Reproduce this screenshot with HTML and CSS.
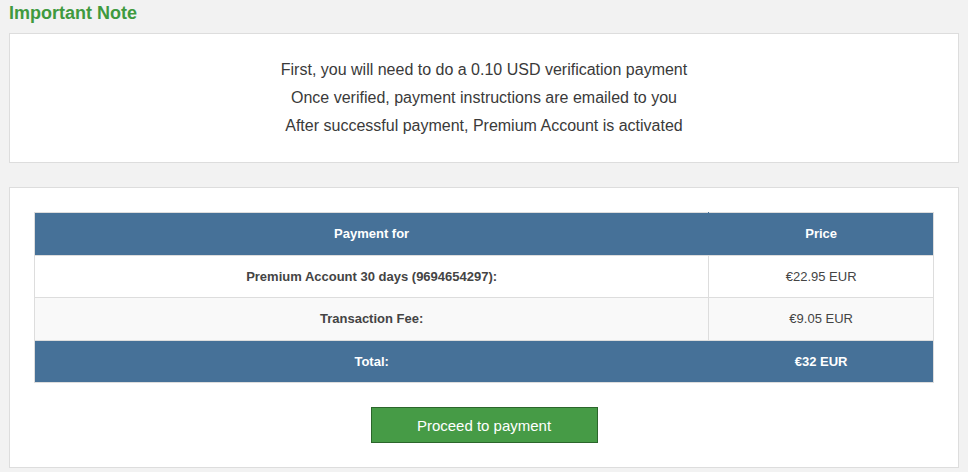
FILE: index.html
```html
<!DOCTYPE html>
<html lang="en">
<head>
    <meta charset="UTF-8">
    <meta name="viewport" content="width=device-width, initial-scale=1.0">
    <title>Payment</title>
    <link rel="stylesheet" href="styles.css">
</head>
<body>
    <h2 class="note-title">Important Note</h2>

    <div class="panel note-panel">
        <p>First, you will need to do a 0.10 USD verification payment</p>
        <p>Once verified, payment instructions are emailed to you</p>
        <p>After successful payment, Premium Account is activated</p>
    </div>

    <div class="panel order-panel">
        <table class="order-table">
            <thead>
                <tr>
                    <th>Payment for</th>
                    <th class="price-col">Price</th>
                </tr>
            </thead>
            <tbody>
                <tr>
                    <td class="label">Premium Account 30 days (9694654297):</td>
                    <td>&euro;22.95 EUR</td>
                </tr>
                <tr class="alt">
                    <td class="label">Transaction Fee:</td>
                    <td>&euro;9.05 EUR</td>
                </tr>
                <tr class="total">
                    <td>Total:</td>
                    <td>&euro;32 EUR</td>
                </tr>
            </tbody>
        </table>
        <div class="actions">
            <button class="pay-btn">Proceed to payment</button>
        </div>
    </div>
</body>
</html>
```

FILE: styles.css
```css
body {
    margin: 0;
    padding: 0 9px;
    background: #f2f2f2;
    font-family: "Liberation Sans", Arial, sans-serif;
    color: #333;
}
.note-title {
    margin: 0;
    padding-top: 2px;
    height: 31px;
    font-size: 18px;
    line-height: 22px;
    color: #3f9a3f;
}
.panel {
    background: #fff;
    border: 1px solid #ddd;
}
.note-panel {
    padding: 22px 20px;
    text-align: center;
}
.note-panel p {
    margin: 0;
    font-size: 16px;
    line-height: 28px;
    color: #3a3a3a;
}
.order-panel {
    margin-top: 24px;
    padding: 24px;
}
.order-table {
    width: 100%;
    border-collapse: collapse;
    font-size: 13px;
    text-align: center;
}
.order-table th,
.order-table td {
    border: 1px solid #ddd;
    height: 41.5px;
    padding: 0 8px;
}
.order-table th {
    background: #467198;
    color: #fff;
    font-weight: bold;
}
.order-table th:first-child,
.order-table tr.total td:first-child {
    border-right-color: #467198;
}
.order-table th:last-child,
.order-table tr.total td:last-child {
    border-left-color: #467198;
}
.price-col {
    width: 25%;
}
.order-table td {
    color: #444;
}
.order-table td.label {
    font-weight: bold;
}
.order-table tr.alt td {
    background: #f9f9f9;
}
.order-table tr.total td {
    background: #467198;
    color: #fff;
    font-weight: bold;
}
.actions {
    padding-top: 24px;
    text-align: center;
}
.pay-btn {
    width: 227px;
    height: 36px;
    background: #469b46;
    border: 1px solid #2b662b;
    color: #fff;
    font-family: "Liberation Sans", Arial, sans-serif;
    font-size: 15px;
    cursor: pointer;
}
```
